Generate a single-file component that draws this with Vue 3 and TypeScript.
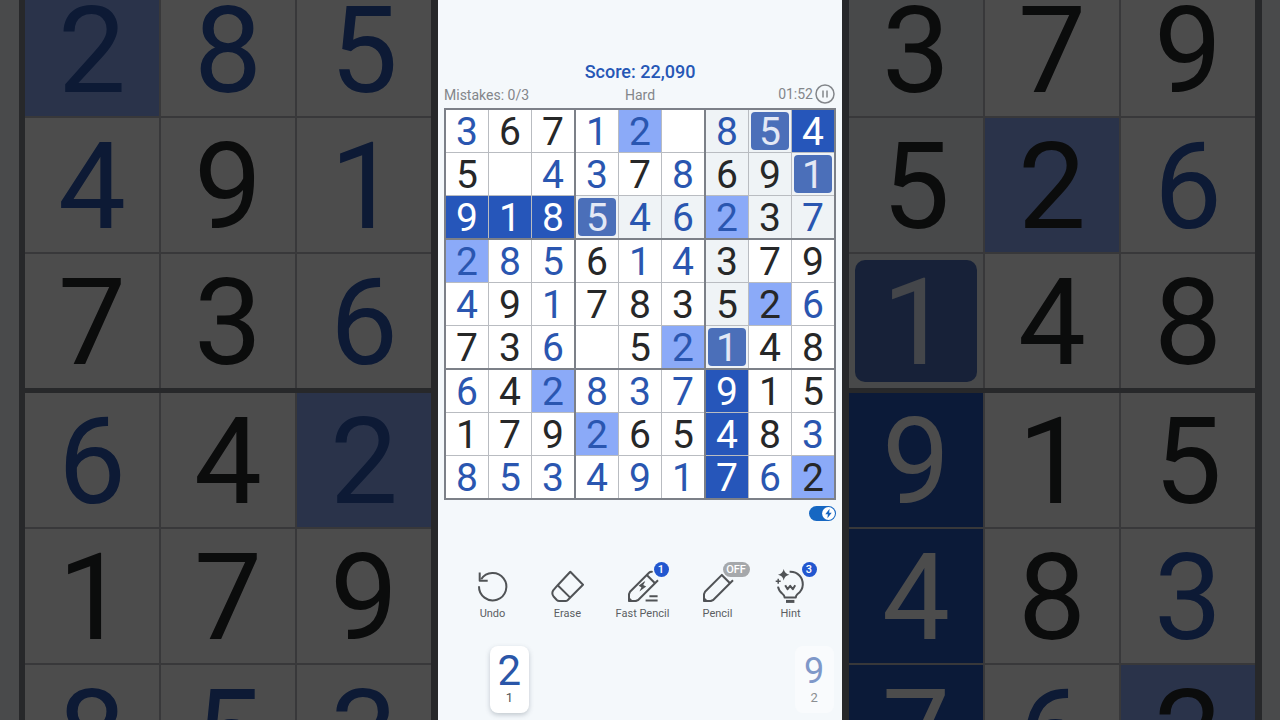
<script setup lang="ts">
import { ref } from 'vue'

interface Cell {
  row: number
  col: number
  digit: string
  classes: string[]
}

// Each cell is a digit followed by flags:
// b = entered, k = given, h = same digit, s = shaded, m = marked, d = solid
const layout: string[] = [
  '3b 6k 7k 1b 2bh . 8bs 5sm 4d',
  '5k . 4b 3b 7k 8b 6ks 9ks 1sm',
  '9d 1d 8d 5sm 4bs 6bs 2bh 3ks 7bs',
  '2bh 8b 5b 6k 1b 4b 3ks 7k 9k',
  '4b 9k 1b 7k 8k 3k 5ks 2kh 6b',
  '7k 3k 6b . 5k 2bh 1sm 4k 8k',
  '6b 4k 2bh 8b 3b 7b 9d 1k 5k',
  '1k 7k 9k 2bh 6k 5k 4d 8k 3b',
  '8b 5b 3b 4b 9b 1b 7d 6b 2kh',
]

const flagNames: Record<string, string> = {
  b: 'entered',
  k: 'given',
  h: 'same',
  s: 'shaded',
  m: 'marked',
  d: 'solid',
}

const cells: Cell[][] = layout.map((line, row) =>
  line.split(' ').map((token, col) => ({
    row,
    col,
    digit: token === '.' ? '' : token[0],
    classes: token === '.' ? [] : [...token.slice(1)].map((f) => flagNames[f]),
  })),
)

function box(index: number): Cell[] {
  const top = Math.floor(index / 3) * 3
  const left = (index % 3) * 3
  return cells.slice(top, top + 3).flatMap((r) => r.slice(left, left + 3))
}

const boxes: Cell[][] = Array.from({ length: 9 }, (_, i) => box(i))
const leftBoxes: Cell[][] = [boxes[3], boxes[6]]
const rightBoxes: Cell[][] = [boxes[5], boxes[8]]

const quickMode = ref(true)

const pad = [1, 2, 3, 4, 5, 6, 7, 8, 9].map((digit) => ({
  digit,
  left: digit === 2 ? 1 : digit === 9 ? 2 : 0,
}))
</script>

<template>
  <div class="stage">
    <div class="side side-left" aria-hidden="true">
      <div class="big-board">
        <div v-for="(b, i) in leftBoxes" :key="i" class="box">
          <div v-for="c in b" :key="c.row * 9 + c.col" class="cell" :class="c.classes">
            <span>{{ c.digit }}</span>
          </div>
        </div>
      </div>
    </div>

    <main class="game">
      <h1 class="score">Score: 22,090</h1>
      <div class="info">
        <span>Mistakes: 0/3</span>
        <span>Hard</span>
        <span class="clock">
          01:52
          <button type="button" class="pause" aria-label="Pause">
            <svg viewBox="0 0 20 20" fill="none" stroke="currentColor">
              <circle cx="10" cy="10" r="9" stroke-width="1.5" />
              <path d="M8 6.5v7M12 6.5v7" stroke-width="1.5" />
            </svg>
          </button>
        </span>
      </div>

      <div class="board">
        <div v-for="(b, i) in boxes" :key="i" class="box">
          <button
            v-for="c in b"
            :key="c.row * 9 + c.col"
            type="button"
            class="cell"
            :class="c.classes"
            :aria-label="`Row ${c.row + 1}, column ${c.col + 1}: ${c.digit || 'empty'}`"
          >
            <span>{{ c.digit }}</span>
          </button>
        </div>
      </div>

      <label class="toggle">
        <input v-model="quickMode" type="checkbox" aria-label="Quick mode" />
        <svg class="knob" viewBox="0 0 14 14">
          <circle cx="7" cy="7" r="6" fill="#fff" />
          <path d="M8 2.5 4 7.6h2.4L6 11.5l4-5.1H7.6z" fill="#1565c0" />
        </svg>
      </label>

      <div class="tools">
        <button type="button" class="tool">
          <svg class="icon" viewBox="0 0 35 35">
            <path d="M4 17.3A13.7 13.7 0 1 0 6.2 10.2" />
            <path d="M4.7 3.5v8.2h8" />
          </svg>
          Undo
        </button>
        <button type="button" class="tool">
          <svg class="icon" viewBox="0 0 35 35">
            <path d="M20.3 2.8 33 15.7 17.6 31.2Q16.8 32 15.5 32H9.2Q7.8 32 6.8 31L3.8 27.8Q1.2 24.6 3.2 21.4L7.7 16.2Z" />
            <path d="M7.7 16.2 20.2 28.6" />
          </svg>
          Erase
        </button>
        <button type="button" class="tool">
          <svg class="icon" viewBox="0 0 35 35">
            <path d="M33 11.2 13.2 31 10.8 32H4V25.2L5 22.8 24 3.8Q25.6 2.2 27.6 3" />
            <path d="M21.8 6 29.8 14" />
            <path d="M3.5 27.5 8.5 32.5H3.5Z" class="solid-part" />
            <path d="M19.2 12.6 13.6 16.8l2.8 1.4-2 4.2 6.8-5-3-1.4 2-3.4Z" class="solid-part" />
            <path d="M24.4 27.2H32.6M20.6 31.6H32.6" />
          </svg>
          <span class="badge count">1</span>
          Fast Pencil
        </button>
        <button type="button" class="tool">
          <svg class="icon" viewBox="0 0 35 35">
            <path d="M33 11.2 13.2 31 10.8 32H4V25.2L5 22.8 22.4 5.4" />
            <path d="M21.8 6 29.8 14" />
            <path d="M3.5 27.5 8.5 32.5H3.5Z" class="solid-part" />
          </svg>
          <span class="badge off">OFF</span>
          Pencil
        </button>
        <button type="button" class="tool">
          <svg class="icon" viewBox="0 0 35 35">
            <path d="M16.6 2.8C25 2.4 30 8.8 29.8 15.8 29.6 20.4 27.2 23.2 24.6 25 23.4 26 22.8 27 22.8 28.6H11.6C11.6 26.6 10.8 25.8 9.4 24.8 7 23 5.6 20.8 5 17.6" />
            <path d="M13 32.4H21.4" stroke-width="3" />
            <path d="M12.2 16.2 14.6 20.2 17.2 16.8 19.8 20.2 22.2 16.2" />
            <path d="M10.7 0Q11.6 4.8 16.4 5.7 11.6 6.6 10.7 11.4 9.8 6.6 5 5.7 9.8 4.8 10.7 0Z" class="solid-part" />
            <path d="M5.2 9.8v5M2.7 12.3h5" stroke-width="1.5" />
          </svg>
          <span class="badge count">3</span>
          Hint
        </button>
      </div>

      <div class="pad">
        <div v-for="p in pad" :key="p.digit" class="slot">
          <button v-if="p.left" type="button" class="key" :class="{ fading: p.digit === 9 }">
            <span class="key-digit">{{ p.digit }}</span>
            <span class="key-left">{{ p.left }}</span>
          </button>
        </div>
      </div>
    </main>

    <div class="side side-right" aria-hidden="true">
      <div class="big-board">
        <div v-for="(b, i) in rightBoxes" :key="i" class="box">
          <div v-for="c in b" :key="c.row * 9 + c.col" class="cell" :class="c.classes">
            <span>{{ c.digit }}</span>
          </div>
        </div>
      </div>
    </div>
  </div>
</template>

<style>
body {
  margin: 0;
}
</style>

<style scoped>
.stage {
  display: flex;
  height: 100vh;
  overflow: hidden;
  font-family: Roboto, 'Liberation Sans', sans-serif;
  background: #f4f8fb;
}

button {
  margin: 0;
  padding: 0;
  border: 0;
  background: none;
  color: inherit;
  font: inherit;
  cursor: pointer;
}

.board {
  display: grid;
  grid-template-columns: repeat(3, 1fr);
  gap: 2px;
  padding: 2px;
  background: #7c8088;
}

.box {
  display: grid;
  grid-template-columns: repeat(3, 1fr);
  gap: 1px;
  background: #b9bcc1;
}

.cell {
  box-sizing: border-box;
  aspect-ratio: 1;
  background: #fff;
  color: #262728;
  font-size: 39px;
  line-height: 1;
}

.cell span {
  display: flex;
  align-items: center;
  justify-content: center;
  box-sizing: border-box;
  height: 100%;
  padding-top: 2px;
}

.entered {
  color: #2a56b0;
}

.shaded {
  background: #eff3f6;
}

.same {
  background: #8baaf8;
}

.solid {
  background: #2656ba;
  color: #fff;
}

.marked {
  padding: 2px;
  color: #e3e8f5;
}

.marked span {
  border-radius: 4px;
  background: #4b6fb9;
}

.side {
  flex: 1;
  display: flex;
  align-items: flex-start;
  min-width: 0;
  overflow: hidden;
  background: #f3f7fb;
  filter: brightness(0.3);
}

.side-left {
  justify-content: flex-end;
}

.big-board {
  flex: none;
  display: flex;
  flex-direction: column;
  gap: 5px;
  margin-top: -18px;
  padding: 0 7px 7px 6px;
  background: #83868c;
}

.side-right .big-board {
  padding: 0 7px 7px;
}

.big-board .box {
  grid-template-columns: repeat(3, 134px);
  grid-auto-rows: 134px;
  gap: 2px;
}

.big-board .cell {
  font-size: 121px;
}

.big-board .cell span {
  padding-top: 4px;
}

.big-board .marked {
  padding: 6px;
}

.big-board .marked span {
  border-radius: 10px;
}

.game {
  flex: 0 1 404px;
  box-sizing: border-box;
  min-width: 0;
  padding: 62px 6px 0;
}

.score {
  margin: 0;
  color: #2657b6;
  font-size: 18px;
  font-weight: 500;
  line-height: 20px;
  text-align: center;
}

.info {
  display: grid;
  grid-template-columns: 1fr auto 1fr;
  align-items: center;
  height: 26px;
  color: #83868a;
  font-size: 14px;
}

.clock {
  display: flex;
  align-items: center;
  justify-content: flex-end;
  gap: 2px;
  padding: 0 1px 2px 0;
}

.pause {
  width: 20px;
  height: 20px;
}

.pause svg {
  display: block;
}

.toggle {
  position: relative;
  display: block;
  width: 27px;
  height: 15px;
  margin: 6px 0 0 auto;
}

.toggle input {
  appearance: none;
  display: block;
  width: 100%;
  height: 100%;
  margin: 0;
  border-radius: 8px;
  background: #1667c2;
}

.knob {
  position: absolute;
  top: 0;
  right: 0;
  width: 15px;
  height: 15px;
  pointer-events: none;
}

.tools {
  display: grid;
  grid-template-columns: repeat(4, 75fr) 71fr;
  margin: 48px 10px 0 11px;
}

.tool {
  position: relative;
  display: flex;
  flex-direction: column;
  align-items: center;
  gap: 3px;
  color: #5b5e62;
  font-size: 11px;
  line-height: 14px;
  white-space: nowrap;
}

.icon {
  width: 35px;
  height: 35px;
  fill: none;
  stroke: #505356;
  stroke-width: 2;
  stroke-linejoin: round;
}

.solid-part {
  fill: #505356;
  stroke: none;
}

.badge {
  position: absolute;
  top: -7px;
  left: 50%;
  box-sizing: border-box;
  height: 15px;
  border-radius: 8px;
  color: #fff;
  font-weight: 500;
  line-height: 15px;
  text-align: center;
}

.count {
  width: 15px;
  margin-left: 11px;
  background: #2257cf;
}

.off {
  width: 27px;
  margin-left: 5px;
  background: #a5a8ab;
}

.pad {
  display: grid;
  grid-template-columns: repeat(9, 1fr);
  margin-top: 25px;
}

.slot {
  display: flex;
  justify-content: center;
}

.key {
  display: flex;
  flex-direction: column;
  align-items: center;
  width: 39px;
  height: 67px;
  padding-top: 5px;
  box-sizing: border-box;
  border-radius: 8px;
  background: #fff;
  box-shadow: 0 2px 5px rgba(60, 75, 95, 0.28);
}

.key-digit {
  color: #2a56a8;
  font-size: 42px;
  line-height: 40px;
}

.key-left {
  color: #55585c;
  font-size: 13px;
  line-height: 13px;
}

.fading {
  background: #f9fbfd;
  box-shadow: none;
}

.fading .key-digit {
  color: #7f98c9;
  font-size: 36px;
}

.fading .key-left {
  color: #8b8e92;
}
</style>
